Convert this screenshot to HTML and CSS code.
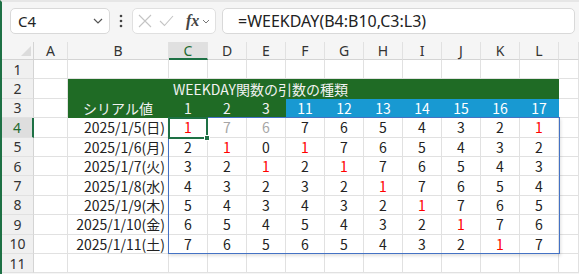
FILE: index.html
```html
<!DOCTYPE html>
<html lang="ja">

<head>
  <meta charset="UTF-8" />
  <title>WEEKDAY</title>
  <link rel="stylesheet" href="styles.css">
</head>

<body>
  <div class="toolbar">
    <div class="namebox">
      <span>C4</span>
      <svg class="chev" width="10" height="6" viewBox="0 0 10 6"><path d="M1 1l4 4 4-4" fill="none" stroke="#555" stroke-width="1.2" /></svg>
    </div>
    <div class="kebab">
      <svg width="4" height="14" viewBox="0 0 4 14"><circle cx="2" cy="2" r="1.3" fill="#444" /><circle cx="2" cy="7" r="1.3" fill="#444" /><circle cx="2" cy="12" r="1.3" fill="#444" /></svg>
    </div>
    <div class="fxbox">
      <svg width="14" height="14" viewBox="0 0 14 14"><path d="M1 1l12 12M13 1L1 13" stroke="#c4c4c4" stroke-width="1.1" /></svg>
      <svg width="15" height="12" viewBox="0 0 15 12"><path d="M1 6l4.5 4.5L14 1" fill="none" stroke="#c4c4c4" stroke-width="1.1" /></svg>
      <span class="fx">fx</span>
      <svg width="8" height="5" viewBox="0 0 8 5"><path d="M1 1l3 3 3-3" fill="none" stroke="#777" stroke-width="1" /></svg>
    </div>
    <div class="formula">=WEEKDAY(B4:B10,C3:L3)</div>
  </div>

  <div class="sheet">
    <div class="cells">
      <span class="corner"><i></i></span><span class="ch">A</span><span class="ch">B</span><span class="ch on">C</span><span class="ch">D</span><span class="ch">E</span><span class="ch">F</span><span class="ch">G</span><span class="ch">H</span><span class="ch">I</span><span class="ch">J</span><span class="ch">K</span><span class="ch">L</span><span class="ch"></span>

      <span class="rh">1</span><span></span><span></span><span></span><span></span><span></span><span></span><span></span><span></span><span></span><span></span><span></span><span></span><span></span>

      <span class="rh">2</span><span></span><span class="green"></span><span class="green title">WEEKDAY関数の引数の種類</span><span></span>

      <span class="rh">3</span><span></span><span class="green head">シリアル値</span><span class="green head">1</span><span class="green head">2</span><span class="green head">3</span><span class="blue">11</span><span class="blue">12</span><span class="blue">13</span><span class="blue">14</span><span class="blue">15</span><span class="blue">16</span><span class="blue">17</span><span></span>

      <span class="rh on">4</span><span></span><span class="date">2025/1/5(日)</span><span class="red">1</span><span class="dim">7</span><span class="dim">6</span><span>7</span><span>6</span><span>5</span><span>4</span><span>3</span><span>2</span><span class="red">1</span><span></span>

      <span class="rh">5</span><span></span><span class="date">2025/1/6(月)</span><span>2</span><span class="red">1</span><span>0</span><span class="red">1</span><span>7</span><span>6</span><span>5</span><span>4</span><span>3</span><span>2</span><span></span>

      <span class="rh">6</span><span></span><span class="date">2025/1/7(火)</span><span>3</span><span>2</span><span class="red">1</span><span>2</span><span class="red">1</span><span>7</span><span>6</span><span>5</span><span>4</span><span>3</span><span></span>

      <span class="rh">7</span><span></span><span class="date">2025/1/8(水)</span><span>4</span><span>3</span><span>2</span><span>3</span><span>2</span><span class="red">1</span><span>7</span><span>6</span><span>5</span><span>4</span><span></span>

      <span class="rh">8</span><span></span><span class="date">2025/1/9(木)</span><span>5</span><span>4</span><span>3</span><span>4</span><span>3</span><span>2</span><span class="red">1</span><span>7</span><span>6</span><span>5</span><span></span>

      <span class="rh">9</span><span></span><span class="date">2025/1/10(金)</span><span>6</span><span>5</span><span>4</span><span>5</span><span>4</span><span>3</span><span>2</span><span class="red">1</span><span>7</span><span>6</span><span></span>

      <span class="rh">10</span><span></span><span class="date">2025/1/11(土)</span><span>7</span><span>6</span><span>5</span><span>6</span><span>5</span><span>4</span><span>3</span><span>2</span><span class="red">1</span><span>7</span><span></span>

      <span class="rh">11</span><span></span><span></span><span></span><span></span><span></span><span></span><span></span><span></span><span></span><span></span><span></span><span></span><span></span>
    </div>

    <div class="marks">
      <div class="range"></div>
      <div class="cursor"><i class="handle"></i></div>
    </div>
  </div>
</body>

</html>
```

FILE: styles.css
```css
* {
  margin: 0;
  padding: 0;
  box-sizing: border-box;
}

body {
  width: 579px;
  height: 274px;
  overflow: hidden;
  background: #f5f5f5;
  border-left: 2px solid #1e7145;
  border-top: 2px solid #e6e6e6;
  font-family: "Noto Sans", "Noto Sans CJK JP", sans-serif;
  color: #222;
}

/* formula bar */
.toolbar {
  height: 40px;
  display: flex;
  align-items: flex-start;
  padding: 6px 4px 0 8px;
}

.namebox {
  width: 100px;
  height: 26px;
  background: #fff;
  border: 1px solid #d9d9d9;
  border-radius: 5px;
  display: flex;
  align-items: center;
  justify-content: space-between;
  padding: 0 6px 0 7px;
  font-size: 15px;
}

.kebab {
  width: 22px;
  height: 26px;
  display: flex;
  align-items: center;
  justify-content: center;
}

.fxbox {
  width: 84px;
  height: 26px;
  border: 1px solid #e0e0e0;
  border-radius: 5px;
  background: #fff;
  display: flex;
  align-items: center;
  gap: 7px;
  padding-left: 5px;
}

.fx {
  font-family: "Liberation Serif", serif;
  font-style: italic;
  font-weight: bold;
  font-size: 16px;
  color: #444;
  margin-left: 5px;
  margin-right: -4px;
}

.formula {
  flex: 1;
  height: 26px;
  margin-left: 6px;
  background: #fff;
  border: 1px solid #d9d9d9;
  border-radius: 5px;
  padding-left: 15px;
  font-size: 16px;
  line-height: 24px;
  color: #222;
}

/* grid */
.sheet {
  display: grid;
}

.cells,
.marks {
  grid-area: 1 / 1;
  display: grid;
  grid-template-columns: 32px 34px 101px repeat(10, 39px) 1fr;
  grid-template-rows: 18px repeat(11, 19.4px);
}

.cells {
  background: #fff;
  font-family: "Noto Sans CJK JP", sans-serif;
  font-size: 14px;
}

.cells > span {
  display: flex;
  align-items: center;
  justify-content: center;
  border-right: 1px solid #e1e1e1;
  border-bottom: 1px solid #e1e1e1;
  white-space: nowrap;
}

.cells > .ch {
  background: #f5f5f5;
  font-family: "Noto Sans", sans-serif;
  color: #333;
  border-bottom-color: #d4d4d4;
}

.cells > .ch.on {
  background: #e0e0e0;
  color: #1e6b30;
  border-bottom: 2px solid #1e7145;
}

.cells > .corner {
  background: #f5f5f5;
  border-right-color: #d4d4d4;
  border-bottom-color: #d4d4d4;
  align-items: flex-end;
  justify-content: flex-end;
  padding: 0 2px 3px 0;
}

.corner i {
  width: 10px;
  height: 10px;
  background: #dcdcdc;
  clip-path: polygon(100% 0, 100% 100%, 0 100%);
}

.cells > .rh {
  background: #f0f0f0;
  font-family: "Noto Sans", sans-serif;
  color: #333;
  border-right-color: #d4d4d4;
}

.cells > .rh.on {
  background: #dedede;
  color: #1e6b30;
  border-right: 2px solid #1e7145;
}

.cells > .green {
  background: #1f6b25;
  border-color: #1f6b25;
  color: #f2f2f2;
}

.cells > .title {
  grid-column: span 10;
  justify-content: flex-start;
  padding-left: 4px;
}

.cells > .blue {
  background: #1899d2;
  border-color: #1899d2;
  color: #fff;
}

.cells > .date {
  justify-content: flex-end;
  padding-right: 3px;
}

.cells > .red {
  color: #ff0000;
}

.cells > .dim {
  color: #a6a6a6;
}

/* selection overlay */
.marks {
  pointer-events: none;
}

.range {
  grid-column: 4 / 14;
  grid-row: 5 / 12;
  margin: -1px -1px 0 -1px;
  border: 1px solid #4472c4;
  box-shadow: 1px 2px 3px rgba(0, 0, 0, 0.12);
}

.cursor {
  grid-column: 4 / 5;
  grid-row: 5 / 6;
  margin: -1px 0 -1px -1px;
  border: 2px solid #1e7145;
  position: relative;
}

.handle {
  position: absolute;
  right: -4px;
  bottom: -4px;
  width: 6px;
  height: 6px;
  background: #1e7145;
  border: 1px solid #fff;
}
```
